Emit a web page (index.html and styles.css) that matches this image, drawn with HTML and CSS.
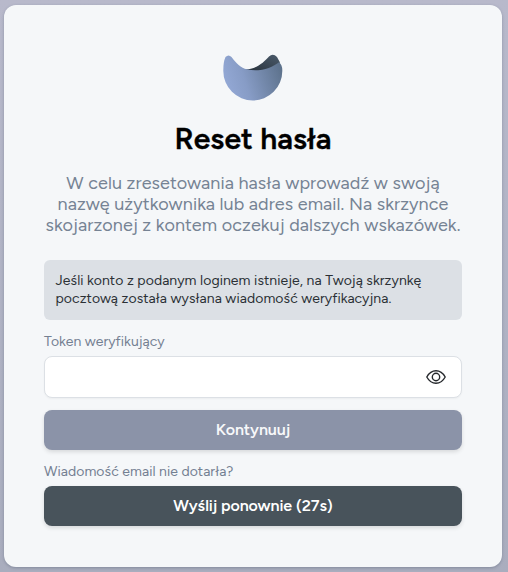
FILE: index.html
```html
<!DOCTYPE html>
<html lang="pl">
<head>
<meta charset="utf-8">
<title>Reset hasła</title>
<link rel="stylesheet" href="styles.css">
</head>
<body>
<main class="card">
  <svg class="logo" width="60" height="48" viewBox="0 0 60 48" aria-hidden="true">
    <defs>
      <linearGradient id="bowl" x1="0" y1=".6" x2="1" y2=".35">
        <stop offset="0" stop-color="#94a9d6"/>
        <stop offset="0.35" stop-color="#879cc6"/>
        <stop offset="1" stop-color="#5d728c"/>
      </linearGradient>
      <linearGradient id="inner" x1="0" y1="1" x2="1" y2="0">
        <stop offset="0" stop-color="#26303a"/>
        <stop offset="1" stop-color="#4b5b6b"/>
      </linearGradient>
    </defs>
    <path fill="url(#inner)" d="M22 15.500C34 15 41 8 46 2.500Q50-1 54 3L57 8.500L48 16L26 17.500Z"/>
    <path fill="url(#bowl)" d="M2.500 3Q5.500 0 8.500 3C13 9 18 14 24 15.300C36 18.500 49 14 56 8.300Q59.500 11 59.300 17A29.500 29.500 0 0 1 .3 17Q.2 8 2.500 3Z"/>
  </svg>
  <h1 class="title">Reset hasła</h1>
  <p class="intro">W celu zresetowania hasła wprowadź w swoją<br>nazwę użytkownika lub adres email. Na skrzynce<br>skojarzonej z kontem oczekuj dalszych wskazówek.</p>
  <div class="notice">Jeśli konto z podanym loginem istnieje, na Twoją skrzynkę<br>pocztową została wysłana wiadomość weryfikacyjna.</div>
  <label class="label" for="token">Token weryfikujący</label>
  <div class="field">
    <input class="input" id="token" type="password">
    <svg class="eye" width="20" height="20" viewBox="0 0 20 20" fill="none" stroke="#25282c" stroke-width="1.400" stroke-linejoin="round" aria-hidden="true">
      <path d="M.8 10C3 6 6.200 3.700 10 3.700S17 6 19.200 10C17 14 13.800 16.300 10 16.300S3 14 .8 10Z"/>
      <circle cx="10" cy="10" r="3.700"/>
    </svg>
  </div>
  <button class="button primary">Kontynuuj</button>
  <p class="label">Wiadomość email nie dotarła?</p>
  <button class="button dark">Wyślij ponownie (27s)</button>
</main>
</body>
</html>
```
FILE: styles.css
```css
* { box-sizing: border-box; }
body {
  margin: 0;
  height: 572px;
  padding: 5px 6px 5px 4px;
  overflow: hidden;
  background: linear-gradient(#b8b9cb, #a9adbe);
  font-family: Figtree, Lato, sans-serif;
}
.card {
  display: flex;
  flex-direction: column;
  height: 562px;
  padding: 49px 40px 0;
  border-radius: 12px;
  background: #f5f7f9;
  box-shadow: 0 1px 3px rgba(60, 75, 95, .35);
}
.logo { align-self: center; flex: none; }
.title {
  height: 36px;
  margin: 19px 0 0;
  font-size: 30px;
  line-height: 36px;
  font-weight: 600;
  letter-spacing: .08px;
  -webkit-text-stroke: .35px #000;
  text-align: center;
  color: #000;
}
.intro {
  height: 63px;
  margin: 16px -10px 0;
  font-size: 18px;
  line-height: 21px;
  letter-spacing: .075px;
  text-align: center;
  white-space: nowrap;
  color: #768394;
}
.notice {
  height: 60px;
  margin-top: 24px;
  padding: 12px 11.5px;
  border-radius: 6px;
  background: #dce0e5;
  font-size: 14px;
  line-height: 18px;
  letter-spacing: .065px;
  white-space: nowrap;
  color: #2b3035;
}
.label {
  display: block;
  height: 18px;
  margin: 13px 0 5px;
  font-size: 14px;
  line-height: 18px;
  letter-spacing: .05px;
  color: #748092;
}
.field { position: relative; height: 42px; }
.input {
  display: block;
  width: 100%;
  height: 42px;
  padding: 0 48px 0 12px;
  border: 1px solid #dce0e5;
  border-radius: 8px;
  background: #fff;
  font: inherit;
  box-shadow: 0 1px 2px rgba(0, 0, 0, .04);
}
.eye { position: absolute; top: 11px; right: 16px; }
.button {
  height: 40px;
  flex: none;
  margin: 0;
  padding: 0;
  border: 0;
  border-radius: 8px;
  font-family: inherit;
  font-size: 16px;
  line-height: 40px;
  font-weight: 600;
  letter-spacing: -.08px;
  color: #fff;
  box-shadow: 0 2px 4px rgba(0, 0, 0, .12);
}
.primary { margin-top: 12px; background: #8b93a8; color: #f7f8fa; }
.dark { background: #48535b; }
```
